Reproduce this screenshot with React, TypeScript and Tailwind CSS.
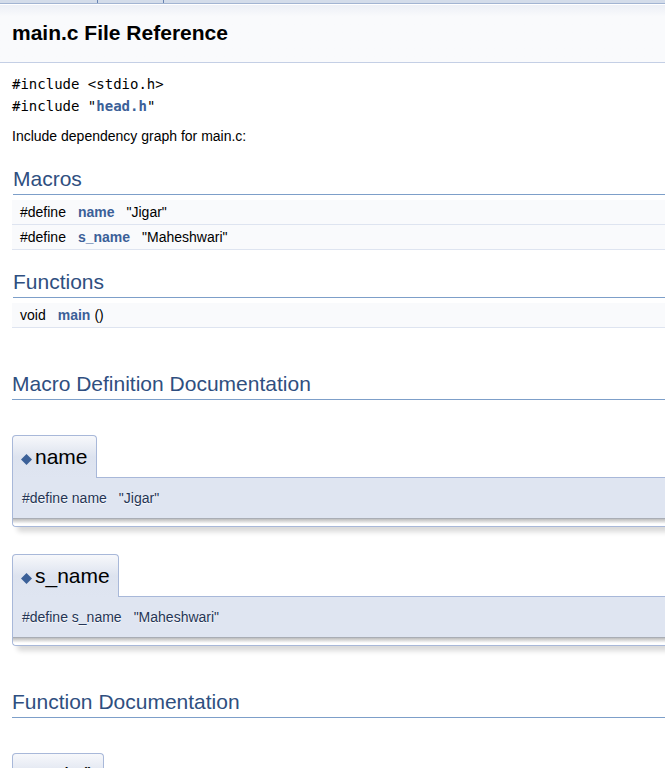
import type { ReactNode } from "react";

function SectionHeading({ inset, children }: { inset?: boolean; children: ReactNode }) {
  return (
    <h2
      className={
        "h-7 border-b border-[#7d9fc9] text-[21px] leading-6 text-[#2f4f80]" + (inset ? " ml-px" : "")
      }
    >
      {children}
    </h2>
  );
}

type Row = { kind: string; name: string; rest: string; gap: string };

function SummaryTable({ rows }: { rows: Row[] }) {
  return (
    <table className="mt-[5px] w-full border-separate border-spacing-0">
      <tbody>
        {rows.map((row) => (
          <tr key={row.name} className="h-[25px] bg-[#f9fafc]">
            <td className="w-px border-b border-[#dee4f0] pl-2 align-middle leading-5 whitespace-nowrap">
              {row.kind}
            </td>
            <td className="border-b border-[#dee4f0] pl-3 align-middle leading-5">
              <a href={"#" + row.name} className="font-bold text-[#3b6098]">
                {row.name}
              </a>
              <span className={row.gap}>{row.rest}</span>
            </td>
          </tr>
        ))}
      </tbody>
    </table>
  );
}

function MemberTitle({ id, label }: { id: string; label: string }) {
  return (
    <h3
      id={id}
      className="relative -mb-px flex h-[43px] w-fit items-center gap-[3px] rounded-t border border-b-0 border-[#a8b8d9] bg-linear-to-b from-[#f7f8fb] via-[#dde3ef] via-50% to-[#dfe5f1] px-2 text-[21px] text-black"
    >
      <a href={"#" + id} aria-label={label} className="pt-1 text-[#3b6098]">
        <svg viewBox="0 0 10 10" className="size-[11px]">
          <path d="M5 0 10 5 5 10 0 5Z" fill="currentColor" />
        </svg>
      </a>
      {label}
    </h3>
  );
}

function Member({ id, label, proto, value }: { id: string; label: string; proto: string; value: string }) {
  return (
    <section>
      <MemberTitle id={id} label={label} />
      <div className="rounded-bl border border-r-0 border-[#a8b8d9] bg-white shadow-[5px_5px_5px_rgba(0,0,0,0.15)]">
        <div className="flex h-10 items-center gap-3 bg-[#dfe5f1] px-[9px] text-[#253555] [text-shadow:0_1px_1px_rgba(255,255,255,0.9)]">
          <span>{proto}</span>
          <span>{value}</span>
        </div>
        <div className="h-2 rounded-bl border-t border-[#a9adb5] bg-linear-to-b from-[#bdbdbd] to-white to-70%" />
      </div>
    </section>
  );
}

export default function App() {
  return (
    <div className="h-screen overflow-hidden bg-white font-['Liberation_Sans',Arial,sans-serif] text-sm text-black">
      <nav aria-label="Files" className="flex h-1 border-b border-[#a2b4d2] bg-[#d3dcea]">
        <span className="w-[98px] border-r border-[#6884b2]" />
        <span className="w-[66px] border-r border-[#6884b2]" />
      </nav>
      <header className="mt-px h-[58px] border-b border-[#c4cfe5] bg-[#f9fafc] bg-linear-to-b from-[#eceff6] to-[#f9fafc] to-20% pt-4 pl-3">
        <h1 className="text-[21px] leading-6 font-bold">main.c File Reference</h1>
      </header>
      <main className="pl-3">
        <div className="pt-[10px] font-['DejaVu_Sans_Mono',monospace] leading-[22px]">
          <p>#include &lt;stdio.h&gt;</p>
          <p>
            #include "
            <a href="#head" className="font-bold text-[#3b6098]">
              head.h
            </a>
            "
          </p>
        </div>
        <p className="mt-2 leading-[22px]">Include dependency graph for main.c:</p>

        <section className="mt-5">
          <SectionHeading inset>Macros</SectionHeading>
          <SummaryTable
            rows={[
              { kind: "#define", name: "name", rest: '"Jigar"', gap: "ml-3" },
              { kind: "#define", name: "s_name", rest: '"Maheshwari"', gap: "ml-3" },
            ]}
          />
        </section>
        <section className="mt-5">
          <SectionHeading inset>Functions</SectionHeading>
          <SummaryTable rows={[{ kind: "void", name: "main", rest: "()", gap: "ml-1" }]} />
        </section>

        <section className="mt-11">
          <SectionHeading>Macro Definition Documentation</SectionHeading>
          <div className="mt-[35px] flex flex-col gap-[27px]">
            <Member id="name" label="name" proto="#define name" value={'"Jigar"'} />
            <Member id="s_name" label="s_name" proto="#define s_name" value={'"Maheshwari"'} />
          </div>
        </section>

        <section className="mt-11">
          <SectionHeading>Function Documentation</SectionHeading>
          <div className="mt-[35px]">
            <Member id="main" label="main()" proto="void main" value="()" />
          </div>
        </section>
      </main>
    </div>
  );
}
